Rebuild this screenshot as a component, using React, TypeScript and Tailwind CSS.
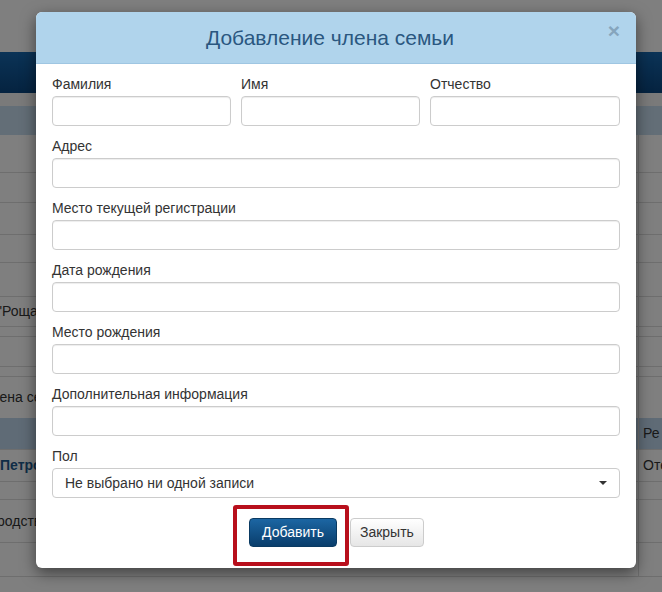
const FIELDS = [
  'Адрес',
  'Место текущей регистрации',
  'Дата рождения',
  'Место рождения',
  'Дополнительная информация',
]

function Field({ label }: { label: string }) {
  return (
    <div className="mb-[10px]">
      <label className="block text-[14px] leading-[20px] mb-[2px] text-[#333]">{label}</label>
      <input
        className="block w-full h-[30px] bg-white border border-[#ccc] rounded-[4px] shadow-[inset_0_1px_1px_rgba(0,0,0,0.075)] outline-none"
        type="text"
      />
    </div>
  )
}

function Row({ h, left, right, line = true, cls = '' }: { h: string; left?: React.ReactNode; right?: React.ReactNode; line?: boolean; cls?: string }) {
  return (
    <div className={`flex items-center ${h} ${line ? 'border-b border-[#dcdcdc]' : ''} ${cls}`}>
      <div className="flex-1 overflow-hidden whitespace-nowrap text-[14px] text-[#333]">{left}</div>
      <div className="w-[24px] self-stretch flex items-center border-l border-[#dcdcdc] pl-[4px] overflow-hidden whitespace-nowrap text-[14px] text-[#333]">
        {right}
      </div>
    </div>
  )
}

export default function App() {
  return (
    <div className="relative w-[662px] h-[592px] overflow-hidden bg-white font-['Liberation_Sans',Arial,sans-serif]">
      {/* page behind the dialog */}
      <div className="h-[52px] bg-white" />
      <div className="h-[41px] bg-gradient-to-b from-[#1767ae] to-[#0a4680]" />
      <div className="h-[13px] bg-[#f4f4f4]" />
      <div className="h-[29px] bg-[#c6dcee]" />
      <Row h="h-[38px]" />
      <Row h="h-[30px]" />
      <Row h="h-[32px]" />
      <Row h="h-[28px]" />
      <Row h="h-[34px]" />
      <Row h="h-[30px]" left={<span className="ml-[-3px]">"Роща"</span>} />
      <Row h="h-[10px]" />
      <Row h="h-[30px]" />
      <Row h="h-[10px]" />
      <Row h="h-[41px]" line={false} left={<span className="ml-[-16px]">члена семьи</span>} />
      <Row h="h-[32px]" cls="bg-[#bfd7ec]" right="Ре" />
      <Row h="h-[32px]" left={<span className="font-bold text-[#1f5a8e]">Петров</span>} right="Отец" />
      <Row h="h-[18px]" />
      <Row h="h-[43px]" left={<span className="ml-[-3px]">родственник</span>} />
      <Row h="h-[34px]" />
      <div className="absolute inset-0 bg-black/50" />

      {/* dialog */}
      <div className="absolute left-[36px] top-[12px] w-[600px] rounded-[6px] bg-white shadow-[0_5px_15px_rgba(0,0,0,0.5)]">
        <div className="relative h-[52px] flex items-center justify-center pr-[12px] bg-[#b0d4ec] rounded-t-[6px] border-b border-[#9fc6e2]">
          <h4 className="text-[21px] text-[#2a5780]">Добавление члена семьи</h4>
          <button className="absolute right-[16px] top-[8px] text-[21px] font-bold leading-none text-[#86a5bc]">×</button>
        </div>
        <div className="px-[16px] pt-[10px] pb-[21px]">
          <div className="grid grid-cols-[179px_179px_1fr] gap-x-[10px]">
            <Field label="Фамилия" />
            <Field label="Имя" />
            <Field label="Отчество" />
          </div>
          {FIELDS.map((f) => (
            <Field key={f} label={f} />
          ))}
          <div className="mb-[10px]">
            <label className="block text-[14px] leading-[20px] mb-[2px] text-[#333]">Пол</label>
            <div className="flex items-center justify-between h-[30px] border border-[#ccc] rounded-[4px] pl-[12px] pr-[12px] text-[14px] text-[#333]">
              <span>Не выбрано ни одной записи</span>
              <span className="w-0 h-0 border-l-[4px] border-r-[4px] border-t-[4px] border-l-transparent border-r-transparent border-t-[#333]" />
            </div>
          </div>
          <div className="flex justify-center gap-[13px] mt-[20px] pl-[1px]">
            <div className="relative">
              <button className="h-[29px] px-[12px] rounded-[4px] border border-[#0a3a62] bg-gradient-to-b from-[#1c66a3] to-[#093e6c] text-[14px] text-white">
                Добавить
              </button>
              <div className="absolute left-[-16px] top-[-13px] w-[116px] h-[61px] border-4 border-[#b80f1c] rounded-[3px]" />
            </div>
            <button className="h-[29px] px-[9px] rounded-[4px] border border-[#ccc] bg-gradient-to-b from-white to-[#e6e6e6] text-[14px] text-[#333]">
              Закрыть
            </button>
          </div>
        </div>
      </div>
    </div>
  )
}
